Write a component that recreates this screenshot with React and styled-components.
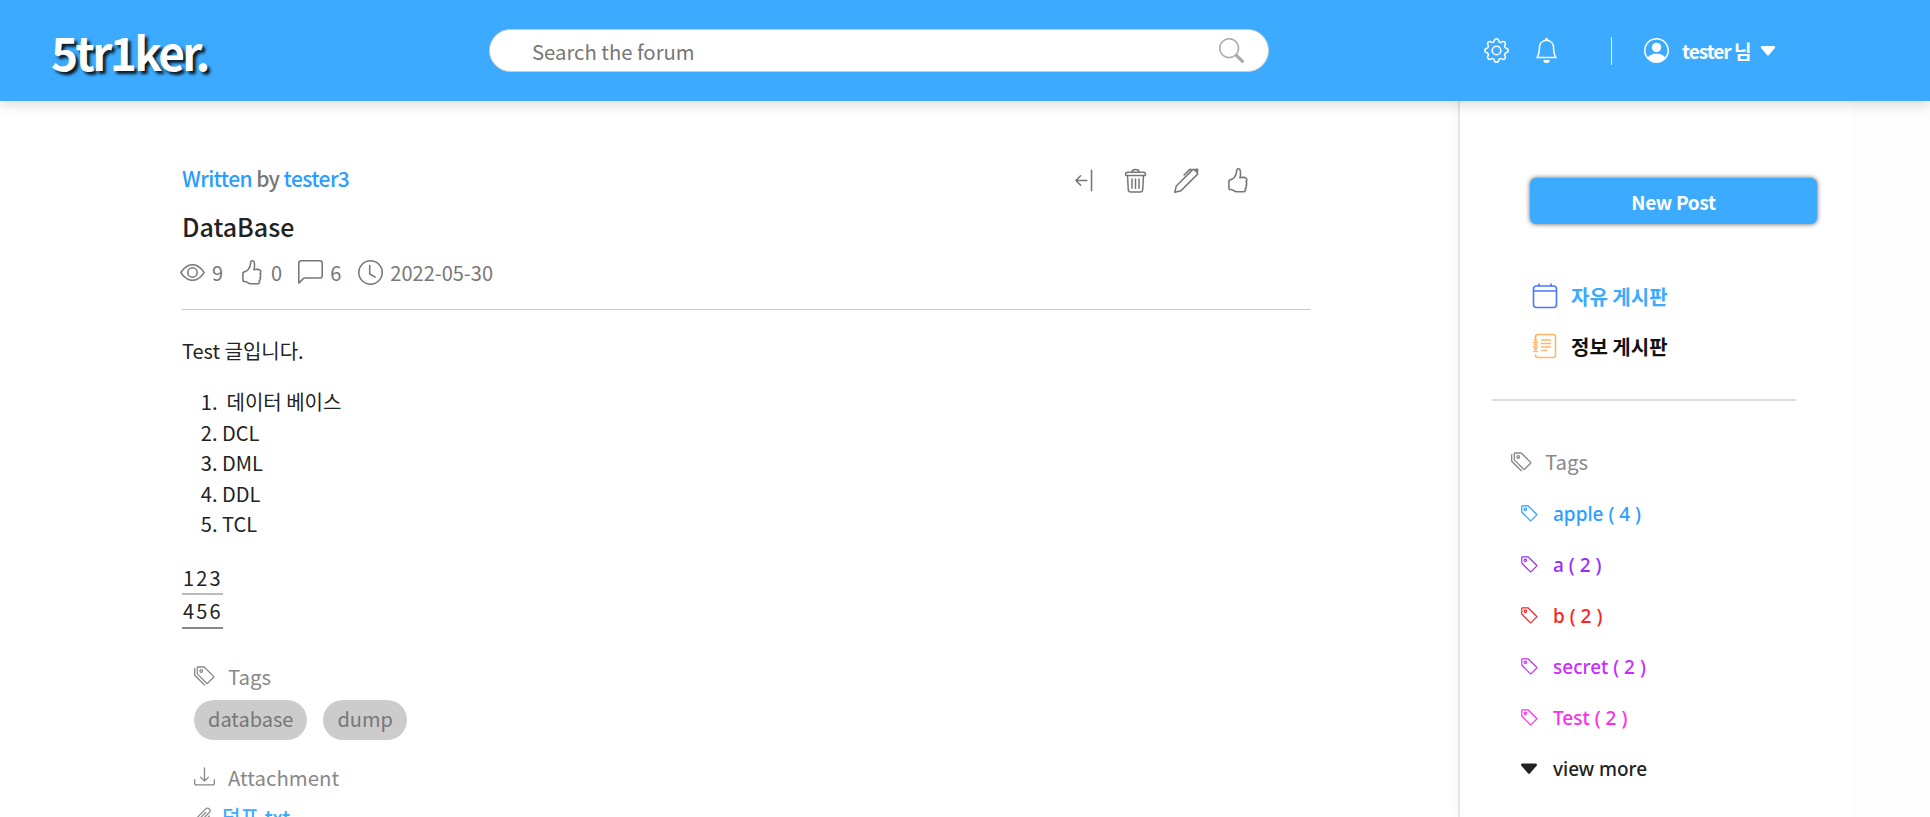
import React from "react";
import styled, { createGlobalStyle } from "styled-components";
import {
  BsGear, BsBell, BsSearch, BsPersonCircle, BsCaretDownFill, BsArrowBarLeft, BsPen,
  BsHandThumbsUp, BsEye, BsChatLeft, BsClock, BsTags, BsTag, BsDownload, BsPaperclip,
} from "react-icons/bs";

const KR = `"Noto Sans CJK KR", "Noto Sans", sans-serif`;
const BLUE = "#3cabff";

const Global = createGlobalStyle`
  html, body { margin: 0; padding: 0; height: 100%; overflow: hidden; background: #fff; }
  body { font-family: ${KR}; }
  #root { height: 100%; }
`;

const Page = styled.div`
  height: 817px;
  display: flex;
  flex-direction: column;
  overflow: hidden;
`;
const Header = styled.header`
  flex: 0 0 101px;
  height: 101px;
  background: ${BLUE};
  box-shadow: 0 3px 12px rgba(0, 0, 0, 0.16);
  position: relative;
  z-index: 2;
  display: flex;
  align-items: center;
  padding-left: 51px;
`;
const Logo = styled.div`
  width: 438px;
  color: #fff;
  font-size: 46px;
  font-weight: 700;
  letter-spacing: -2.6px;
  line-height: 1;
  text-shadow: 3px 3px 3px rgba(0, 0, 0, 0.85);
`;
const Search = styled.div`
  width: 780px;
  height: 43px;
  box-sizing: border-box;
  background: #fff;
  border: 1px solid #ccc;
  border-radius: 22px;
  display: flex;
  align-items: center;
  justify-content: space-between;
  padding: 0 24px 0 42px;
  color: #777;
  font-size: 20.3px;
  svg { color: #aaa; font-size: 25px; }
`;
const HeaderIcons = styled.div`
  margin-left: 215px;
  width: 127px;
  height: 28px;
  display: flex;
  align-items: center;
  gap: 25px;
  color: #fff;
  font-size: 25px;
  border-right: 1px solid #fff;
`;
const UserMenu = styled.div`
  margin-left: 32px;
  display: flex;
  align-items: center;
  color: #fff;
  font-size: 19px;
  font-weight: 700;
  letter-spacing: -1px;
  gap: 12px;
  svg:first-child { font-size: 25px; margin-right: 1px; }
  svg:last-child { font-size: 20px; margin-left: -4px; }
`;
const Body = styled.div`
  flex: 1;
  display: flex;
  min-height: 0;
`;
const Content = styled.main`
  flex: 0 0 1458px;
  box-sizing: border-box;
  padding: 61px 147px 0 182px;
`;
const TopRow = styled.div`
  display: flex;
  align-items: center;
  justify-content: space-between;
  height: 32px;
`;
const Author = styled.div`
  color: #777;
  font-size: 21px;
  font-weight: 500;
  letter-spacing: -0.6px;
  span { color: #2a9dff; }
`;
const Actions = styled.div`
  display: flex;
  align-items: center;
  gap: 26px;
  color: #777;
  font-size: 25px;
  margin: 5px 61px 0 0;
`;
const Title = styled.h1`
  margin: 14px 0 0;
  color: #222;
  font-size: 25px;
  font-weight: 500;
  line-height: 36px;
`;
const Meta = styled.div`
  margin: 10px 0 0 -2px;
  height: 36px;
  display: flex;
  align-items: center;
  color: #777;
  font-size: 20px;
`;
const MetaItem = styled.span`
  display: inline-flex;
  align-items: center;
  gap: ${(p) => p.$gap || 7}px;
  margin: 0 16px 0 ${(p) => p.$shift || 0}px;
  svg { font-size: 25px; }
`;
const Rule = styled.hr`
  border: 0;
  border-top: 1px solid #ccc;
  margin: 19px 0 0;
`;
const Para = styled.p`
  margin: 26px 0 0;
  font-size: 20px;
  line-height: 30px;
  color: #222;
`;
const List = styled.ol`
  margin: 21px 0 0;
  padding-left: 40px;
  font-size: 20px;
  line-height: 30.5px;
  color: #222;
`;
const NumTable = styled.div`
  margin-top: 22px;
  width: 41px;
  color: #222;
  font-size: 20px;
`;
const NumRow = styled.div`
  height: 33.5px;
  line-height: 31px;
  box-sizing: border-box;
  letter-spacing: 2.2px;
  padding-left: 1px;
  border-bottom: ${(p) => (p.$dark ? "2px solid #888" : "2px solid #bbb")};
`;
const Section = styled.div`
  margin: ${(p) => p.$top}px 0 0 12px;
`;
const SectionHead = styled.div`
  display: flex;
  align-items: center;
  gap: 14px;
  color: #888;
  font-size: 20.4px;
  line-height: 30px;
  svg { font-size: 21px; margin-right: -1px; }
`;
const Pills = styled.div`
  display: flex;
  gap: 16px;
  margin-top: 9px;
`;
const Pill = styled.span`
  height: 40px;
  line-height: 38px;
  padding: 0 14px;
  border-radius: 20px;
  background: #ccc;
  color: #777;
  font-size: 20px;
`;
const FileLink = styled.div`
  display: flex;
  align-items: center;
  gap: 8px;
  margin-top: 10px;
  color: ${BLUE};
  font-size: 20px;
  font-weight: 500;
  svg { color: #888; font-size: 20px; transform: rotate(45deg); }
`;
const Sidebar = styled.aside`
  flex: 0 0 393px;
  box-sizing: border-box;
  border-left: 2px solid #e6e6e6;
  box-shadow: 0 0 14px rgba(0, 0, 0, 0.05);
  padding: 77px 0 0 1px;
`;
const NewPost = styled.button`
  display: block;
  width: 287px;
  height: 46px;
  margin-left: 69px;
  border: 0;
  border-radius: 6px;
  background: ${BLUE};
  color: #fff;
  font-family: ${KR};
  font-size: 19px;
  font-weight: 700;
  letter-spacing: -0.3px;
  box-shadow: 0 0 5px rgba(0, 0, 0, 0.65);
`;
const BoardList = styled.div`
  margin: 54px 0 0 71px;
  display: flex;
  flex-direction: column;
  gap: 14px;
`;
const Board = styled.div`
  display: flex;
  align-items: center;
  gap: 13px;
  height: 36px;
  font-size: 20px;
  font-weight: 700;
  color: ${(p) => (p.$active ? "#111" : BLUE)};
  svg { color: ${(p) => (p.$active ? "#ffb66b" : "#4a78ff")}; }
`;
const SideRule = styled.hr`
  border: 0;
  border-top: 2px solid #ddd;
  margin: 35px 55px 0 31px;
`;
const SideHead = styled.div`
  margin: 45px 0 0 50px;
  display: flex;
  align-items: center;
  gap: 14px;
  color: #888;
  font-size: 20.4px;
  line-height: 30px;
  svg { font-size: 21px; margin-right: -1px; }
`;
const TagList = styled.div`
  margin: 12px 0 0 59px;
  display: flex;
  flex-direction: column;
`;
const TagRow = styled.div`
  height: 51px;
  display: flex;
  align-items: center;
  gap: 15px;
  color: ${(p) => p.$color};
  font-family: "Noto Sans", sans-serif;
  font-size: 19px;
  font-weight: 500;
  svg { font-size: 19px; flex: none; margin-right: -1px; }
`;
const MoreCaret = styled(BsCaretDownFill)`
  && { font-size: 22px; margin: 0 -2px; }
`;
const Filler = styled.div`
  flex: 1;
  background: #fdfdfd;
`;

const TrashIcon = () => (
  <svg width="25" height="27" viewBox="0 0 25 27" fill="none" stroke="currentColor" strokeWidth="1.5" strokeLinejoin="round" strokeLinecap="round">
    <path d="M2.500 7.500c0-1.400.8-2.300 2-2.300h16c1.200 0 2 .9 2 2.300 0 .7-.4 1.100-1.100 1.100H3.600c-.7 0-1.100-.4-1.100-1.100z" />
    <path d="M9 5c0-1.500.9-2.500 3.500-2.500S16 3.500 16 5" />
    <path d="M4.500 8.600l.8 14.200c.1 1.400.9 2.200 2.300 2.200h9.800c1.400 0 2.200-.8 2.300-2.200l.8-14.200" />
    <path d="M9 12v9.300M12.500 12v9.300M16 12v9.300" />
  </svg>
);

const CalendarIcon = () => (
  <svg width="26" height="26" viewBox="0 0 26 26" fill="none" stroke="currentColor" strokeWidth="1.6" strokeLinecap="round" strokeLinejoin="round">
    <rect x="1.500" y="3" width="23" height="21.500" rx="3" />
    <path d="M1.500 8h23M7 1v2M19 1v2" />
  </svg>
);

const NotebookIcon = () => (
  <svg width="26" height="26" viewBox="0 0 26 26" fill="none" stroke="currentColor" strokeWidth="1.6" strokeLinecap="round" strokeLinejoin="round">
    <path d="M3.500 4c0-1.600 1-2.500 2.500-2.500h15c1.700 0 2.500 1 2.500 2.500v18c0 1.500-.8 2.500-2.500 2.500H6c-1.500 0-2.500-1-2.500-2.500" />
    <path d="M3.500 4v3M9.500 7h9M9.500 10.500h9M9.500 14h9M9.500 17.500h5" />
    <path d="M1.500 9.500h4M1.500 14h4M1.500 18.500h4" />
    <path d="M2.500 7.500l1-1.200 1 1.200M2.500 12l1-1.200 1 1.200M2.500 16.500l1-1.200 1 1.200" />
  </svg>
);

const tags = [
  ["apple ( 4 )", "#2a9dff"],
  ["a ( 2 )", "#9a2bff"],
  ["b ( 2 )", "#ff2020"],
  ["secret ( 2 )", "#c92bff"],
  ["Test ( 2 )", "#ff2bee"],
];

export default function App() {
  return (
    <Page>
      <Global />
      <Header>
        <Logo>5tr1ker.</Logo>
        <Search>
          <span>Search the forum</span>
          <BsSearch />
        </Search>
        <HeaderIcons>
          <BsGear />
          <BsBell />
        </HeaderIcons>
        <UserMenu>
          <BsPersonCircle />
          <span>tester 님</span>
          <BsCaretDownFill />
        </UserMenu>
      </Header>
      <Body>
        <Content>
          <TopRow>
            <Author>
              <span>Written</span> by <span>tester3</span>
            </Author>
            <Actions>
              <BsArrowBarLeft />
              <TrashIcon />
              <BsPen />
              <BsHandThumbsUp />
            </Actions>
          </TopRow>
          <Title>DataBase</Title>
          <Meta>
            <MetaItem><BsEye />9</MetaItem>
            <MetaItem><BsHandThumbsUp />0</MetaItem>
            <MetaItem><BsChatLeft />6</MetaItem>
            <MetaItem $gap={7} $shift={1}><BsClock />2022-05-30</MetaItem>
          </Meta>
          <Rule />
          <Para>Test 글입니다.</Para>
          <List>
            <li>&nbsp;데이터 베이스</li>
            <li>DCL</li>
            <li>DML</li>
            <li>DDL</li>
            <li>TCL</li>
          </List>
          <NumTable>
            <NumRow>123</NumRow>
            <NumRow $dark>456</NumRow>
          </NumTable>
          <Section $top={32}>
            <SectionHead><BsTags />Tags</SectionHead>
            <Pills>
              <Pill>database</Pill>
              <Pill>dump</Pill>
            </Pills>
          </Section>
          <Section $top={22}>
            <SectionHead><BsDownload />Attachment</SectionHead>
            <FileLink><BsPaperclip />덤프.txt</FileLink>
          </Section>
        </Content>
        <Sidebar>
          <NewPost>New Post</NewPost>
          <BoardList>
            <Board><CalendarIcon />자유 게시판</Board>
            <Board $active><NotebookIcon />정보 게시판</Board>
          </BoardList>
          <SideRule />
          <SideHead><BsTags />Tags</SideHead>
          <TagList>
            {tags.map(([label, color]) => (
              <TagRow key={label} $color={color}><BsTag />{label}</TagRow>
            ))}
            <TagRow $color="#222"><MoreCaret />view more</TagRow>
          </TagList>
        </Sidebar>
        <Filler />
      </Body>
    </Page>
  );
}
